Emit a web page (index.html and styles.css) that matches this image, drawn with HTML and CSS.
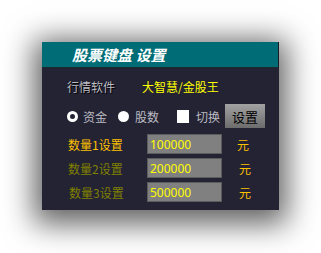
FILE: index.html
```html
<!DOCTYPE html>
<html lang="zh">
<head>
<meta charset="utf-8">
<title>股票键盘设置</title>
<link rel="stylesheet" href="styles.css">
</head>
<body>
<div class="dialog">
  <div class="header"><span class="title">股票键盘 设置</span></div>
  <div class="content">
    <div class="row-soft">
      <span class="soft-label">行情软件</span>
      <span class="soft-value">大智慧/金股王</span>
    </div>
    <div class="row-opts">
      <span class="radio radio-on"></span><span class="opt-text">资金</span>
      <span class="radio radio-off"></span><span class="opt-text">股数</span>
      <span class="check"></span><span class="opt-text check-text">切换</span>
      <span class="btn">设置</span>
    </div>
    <div class="qty-list">
      <div class="qty-row">
        <span class="qty-label qty-active">数量1设置</span>
        <span class="qty-input">100000</span>
        <span class="unit unit-first">元</span>
      </div>
      <div class="qty-row">
        <span class="qty-label qty-dim">数量2设置</span>
        <span class="qty-input">200000</span>
        <span class="unit">元</span>
      </div>
      <div class="qty-row">
        <span class="qty-label qty-dim qty-third">数量3设置</span>
        <span class="qty-input">500000</span>
        <span class="unit">元</span>
      </div>
    </div>
  </div>
</div>
</body>
</html>
```

FILE: styles.css
```css
html, body {
  margin: 0;
  padding: 0;
  background: #ffffff;
}
body {
  box-sizing: border-box;
  min-height: 253px;
  padding: 42px 0 0 42px;
  font-family: "Noto Sans CJK SC", "Noto Sans", sans-serif;
  font-size: 12px;
}
.dialog {
  width: 237px;
  height: 168px;
  background: #232334;
  box-shadow: 0 6px 28px 8px rgba(0, 0, 0, 0.62);
  display: flex;
  flex-direction: column;
}
.header {
  height: 25px;
  background: #006c76;
  border-bottom: 1px solid #1a2a30;
  border-right: 1px solid #1c1c28;
  display: flex;
  align-items: center;
  padding-left: 30px;
}
.title {
  color: #ffffff;
  font-weight: bold;
  font-style: italic;
  font-size: 15px;
  line-height: 16px;
}
.content {
  padding: 8px 0 0 25px;
  display: flex;
  flex-direction: column;
}
.row-soft {
  height: 20px;
  display: flex;
  align-items: center;
}
.soft-label {
  width: 75px;
  color: #bcbcc2;
  text-shadow: 1px 1px 0 #000000;
}
.soft-value {
  color: #ffff00;
}
.row-opts {
  margin-top: 8px;
  height: 24px;
  display: flex;
  align-items: center;
}
.radio {
  width: 11px;
  height: 11px;
  border-radius: 50%;
  box-sizing: border-box;
  flex: none;
}
.radio-on {
  background: #232334;
  border: 3px solid #ffffff;
}
.radio-off {
  background: #ffffff;
  margin-left: 11px;
}
.opt-text {
  color: #bcbcc2;
  margin-left: 5px;
}
.radio-off + .opt-text {
  margin-left: 6px;
}
.check {
  width: 12px;
  height: 13px;
  background: #ffffff;
  margin-left: 18px;
  flex: none;
}
.check-text {
  margin-left: 7px;
}
.btn {
  margin-left: 5px;
  width: 40px;
  height: 24px;
  background: linear-gradient(#a2a2a2, #6c6c6c);
  color: #000000;
  font-size: 13px;
  display: flex;
  align-items: center;
  justify-content: center;
}
.qty-list {
  margin-top: 6px;
  display: flex;
  flex-direction: column;
  gap: 4px;
}
.qty-row {
  height: 20px;
  display: flex;
  align-items: center;
}
.qty-label {
  width: 79px;
  padding-left: 1px;
}
.qty-third {
  width: 78px;
  padding-left: 2px;
}
.qty-active {
  color: #ffc000;
}
.qty-dim {
  color: #808000;
}
.qty-input {
  width: 75px;
  height: 20px;
  box-sizing: border-box;
  background: #808080;
  border: 1px solid #5c5c5c;
  color: #ffff00;
  padding-left: 2px;
  display: flex;
  align-items: center;
  font-family: "Noto Sans", sans-serif;
  font-size: 12px;
}
.unit {
  color: #ffc000;
  margin-left: 17px;
}
.unit-first {
  margin-left: 15px;
}
```
